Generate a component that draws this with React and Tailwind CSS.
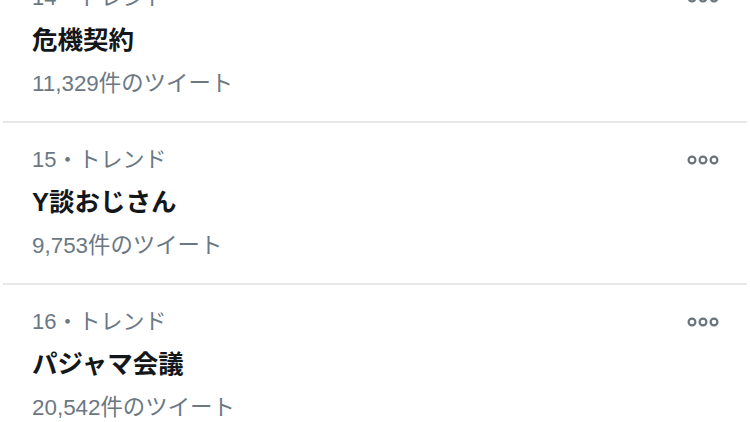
const trends = [
  { rank: 14, name: '危機契約', count: '11,329' },
  { rank: 15, name: 'Y談おじさん', count: '9,753' },
  { rank: 16, name: 'パジャマ会議', count: '20,542' },
];

function MoreIcon() {
  return (
    <svg width="32" height="10" viewBox="0 0 32 10" className="text-[#66747f]">
      {[5, 16, 27].map((cx) => (
        <circle key={cx} cx={cx} cy="5" r="3.4" fill="none" stroke="currentColor" strokeWidth="2.2" />
      ))}
    </svg>
  );
}

function TrendRow({ trend }) {
  return (
    <div className="relative h-[160px] px-[32px]">
      <div className="pt-[24px] text-[22px] leading-[26px] text-[#6b7883]">
        {trend.rank}・トレンド
      </div>
      <div className="mt-[14px] text-[25.5px] leading-[30px] font-bold text-[#14171a]">
        {trend.name}
      </div>
      <div className="mt-[16px] text-[22.4px] leading-[26px] text-[#6b7883]">
        {trend.count}件のツイート
      </div>
      <div className="absolute right-[31px] top-[32px]">
        <MoreIcon />
      </div>
    </div>
  );
}

export default function App() {
  return (
    <div
      className="w-[750px] h-[422px] overflow-hidden bg-white"
      style={{ fontFamily: '"Liberation Sans", "Noto Sans CJK JP", sans-serif' }}
    >
      <div className="-mt-[39px]">
        {trends.map((t, i) => (
          <div key={t.rank}>
            {i > 0 && <div className="ml-[3px] mr-[3px] h-[2px] bg-[#e7e8e9]" />}
            <TrendRow trend={t} />
          </div>
        ))}
      </div>
    </div>
  );
}
